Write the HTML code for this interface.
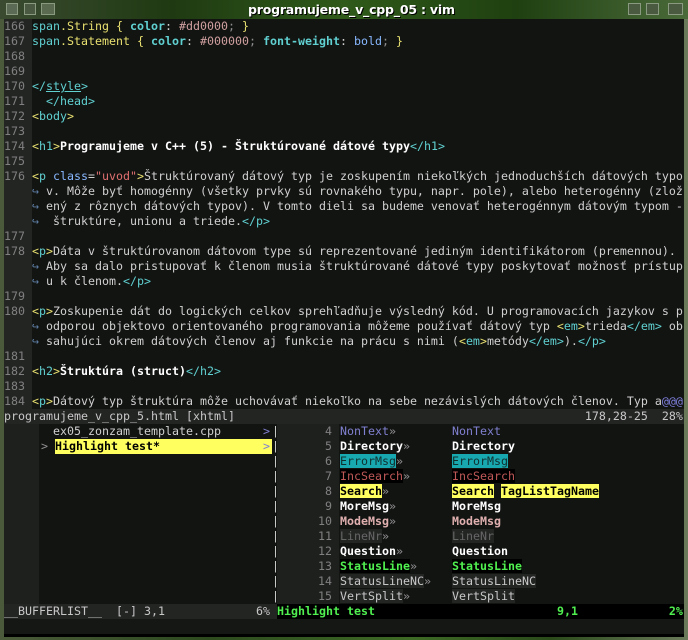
<!DOCTYPE html>
<html><head><meta charset="utf-8"><style>
*{margin:0;padding:0;box-sizing:border-box}
body{width:688px;height:640px;overflow:hidden;background:linear-gradient(90deg,#4a5a3a,#2d4a1e 30%,#3d6a25 60%,#2a4a1a 80%,#6a7a5a);position:relative;font-family:"DejaVu Sans Mono","Liberation Mono",monospace;font-size:11.63px}
#title{position:absolute;left:0;top:0;width:688px;height:19px;background:linear-gradient(90deg,#3a4a30,#1f3a12 25%,#2f5a1a 50%,#1f4010 75%,#4a6a3a);}
#title .t{position:absolute;left:248px;top:2px;font:bold 12.5px "DejaVu Sans","Liberation Sans",sans-serif;color:#fff;letter-spacing:-0.2px;text-shadow:1px 1px 0 #000}
.b{position:absolute;top:3px;width:12px;height:12px;border:1px solid #8a9a80;background:#4a5a40}
#vim{position:absolute;left:4px;top:19px;width:680px;height:618px;background:#121412;color:#d0d0d0;overflow:hidden}
.r{position:absolute;left:0;height:15px;line-height:15px;white-space:pre;width:680px}
.n{display:inline-block;width:28px;background:#232523;color:#808080}
.w{color:#6080a8}
.y{color:#e8e070}.c{color:#60d0d0}.cb{color:#60d0d0;font-weight:bold}.p{color:#d0a0a0}.lb{color:#88b8ff}.rd{color:#e07070}.g{color:#909090}
.bo{font-weight:bold;color:#fff}
.sl{background:#232523;color:#c8c8c8}
#hl div{height:15px;line-height:15px;white-space:pre}
</style></head><body>
<div id="title"><span class="b" style="left:6px;width:12px;background:#5a6a55"></span><span class="b" style="left:24px;background:#4a5a42"></span><span class="b" style="left:41px;width:14px;background:#5a6a50"></span><span class="t">programujeme_v_cpp_05 : vim</span>
<span class="b" style="left:628px;width:13px"></span><span class="b" style="left:646px;width:13px"></span><span class="b" style="left:668px;width:15px"></span></div>
<div id="vim">
<div class="r" style="top:0"><span class="n">166 </span><span class="c">span</span><span class="y">.String</span> <span class="y">{</span> <span class="cb">color</span>: <span class="p">#dd0000</span><span class="g">;</span> <span class="y">}</span></div>
<div class="r" style="top:15px"><span class="n">167 </span><span class="c">span</span><span class="y">.Statement</span> <span class="y">{</span> <span class="cb">color</span>: <span class="p">#000000</span><span class="g">;</span> <span class="cb">font-weight</span>: <span class="lb">bold</span><span class="g">;</span> <span class="y">}</span></div>
<div class="r" style="top:30px"><span class="n">168 </span></div>
<div class="r" style="top:45px"><span class="n">169 </span></div>
<div class="r" style="top:60px"><span class="n">170 </span><span class="c">&lt;/<u>style</u>&gt;</span></div>
<div class="r" style="top:75px"><span class="n">171 </span><span class="c">  &lt;/head&gt;</span></div>
<div class="r" style="top:90px"><span class="n">172 </span><span class="y">&lt;</span><span class="c">body</span><span class="y">&gt;</span></div>
<div class="r" style="top:105px"><span class="n">173 </span></div>
<div class="r" style="top:120px"><span class="n">174 </span><span class="y">&lt;</span><span class="c">h1</span><span class="y">&gt;</span><span class="bo">Programujeme v C++ (5) - Štruktúrované dátové typy</span><span class="c">&lt;/h1&gt;</span></div>
<div class="r" style="top:135px"><span class="n">175 </span></div>
<div class="r" style="top:150px"><span class="n">176 </span><span class="y">&lt;</span><span class="c">p</span> <span class="lb">class</span>=<span class="rd">"uvod"</span><span class="y">&gt;</span>Štruktúrovaný dátový typ je zoskupením niekoľkých jednoduchších dátových typo</div>
<div class="r" style="top:165px"><span class="n">    </span><span class="w">↪</span> v. Môže byť homogénny (všetky prvky sú rovnakého typu, napr. pole), alebo heterogénny (zlož</div>
<div class="r" style="top:180px"><span class="n">    </span><span class="w">↪</span> ený z rôznych dátových typov). V tomto dieli sa budeme venovať heterogénnym dátovým typom -</div>
<div class="r" style="top:195px"><span class="n">    </span><span class="w">↪</span>  štruktúre, unionu a triede.<span class="c">&lt;/p&gt;</span></div>
<div class="r" style="top:210px"><span class="n">177 </span></div>
<div class="r" style="top:225px"><span class="n">178 </span><span class="y">&lt;</span><span class="c">p</span><span class="y">&gt;</span>Dáta v štruktúrovanom dátovom type sú reprezentované jediným identifikátorom (premennou).</div>
<div class="r" style="top:240px"><span class="n">    </span><span class="w">↪</span> Aby sa dalo pristupovať k členom musia štruktúrované dátové typy poskytovať možnosť prístup</div>
<div class="r" style="top:255px"><span class="n">    </span><span class="w">↪</span> u k členom.<span class="c">&lt;/p&gt;</span></div>
<div class="r" style="top:270px"><span class="n">179 </span></div>
<div class="r" style="top:285px"><span class="n">180 </span><span class="y">&lt;</span><span class="c">p</span><span class="y">&gt;</span>Zoskupenie dát do logických celkov sprehľadňuje výsledný kód. U programovacích jazykov s p</div>
<div class="r" style="top:300px"><span class="n">    </span><span class="w">↪</span> odporou objektovo orientovaného programovania môžeme používať dátový typ <span class="y">&lt;</span><span class="c">em</span><span class="y">&gt;</span>trieda<span class="c">&lt;/em&gt;</span> ob</div>
<div class="r" style="top:315px"><span class="n">    </span><span class="w">↪</span> sahujúci okrem dátových členov aj funkcie na prácu s nimi (<span class="y">&lt;</span><span class="c">em</span><span class="y">&gt;</span>metódy<span class="c">&lt;/em&gt;</span>).<span class="c">&lt;/p&gt;</span></div>
<div class="r" style="top:330px"><span class="n">181 </span></div>
<div class="r" style="top:345px"><span class="n">182 </span><span class="y">&lt;</span><span class="c">h2</span><span class="y">&gt;</span><span class="bo">Štruktúra (struct)</span><span class="c">&lt;/h2&gt;</span></div>
<div class="r" style="top:360px"><span class="n">183 </span></div>
<div class="r" style="top:375px"><span class="n">184 </span><span class="y">&lt;</span><span class="c">p</span><span class="y">&gt;</span>Dátový typ štruktúra môže uchovávať niekoľko na sebe nezávislých dátových členov. Typ a<span style="color:#8080e0">@@@</span></div>
<div class="r sl" style="top:390px">programujeme_v_cpp_5.html [xhtml]                                                  178,28-25  28%</div>
<div style="position:absolute;left:0;top:405px;width:35px;height:180px;background:#1e201e"></div>
<div style="position:absolute;left:273px;top:405px;width:62px;height:180px;background:#1e201e"></div>
<div class="r" style="top:405px;left:49px;width:220px">ex05_zonzam_template.cpp</div>
<div class="r" style="top:420px;left:37px;width:230px"><span class="g">&gt;</span> <span style="display:inline-block;width:217px;background:#ffff60;color:#000;font-weight:bold">Highlight test*</span></div>
<div class="r" style="top:405px;left:259px;width:20px;color:#8080d0">&gt;</div>
<div class="r" style="top:420px;left:259px;width:20px;color:#8080d0">&gt;</div>
<div style="position:absolute;left:268px;top:405px;width:7px;height:180px;color:#ccc;line-height:15px;white-space:pre">|
|
|
|
|
|
|
|
|
|
|
|</div>
<div style="position:absolute;left:273px;top:405px;width:62px;color:#808080;line-height:15px;text-align:right;white-space:pre">4 
5 
6 
7 
8 
9 
10 
11 
12 
13 
14 
15 </div>
<div id="hl" style="position:absolute;left:336px;top:405px;width:340px">
<div><span style="color:#8080d0">NonText</span><span class="g">»</span>        <span style="color:#8080d0">NonText</span></div>
<div class="bo">Directory<span class="g" style="font-weight:normal">»</span>      Directory</div>
<div><span style="background:#18a8b0;color:#103030">ErrorMsg</span><span class="g">»</span>       <span style="background:#18a8b0;color:#103030">ErrorMsg</span></div>
<div><span style="background:#000;color:#c05858">IncSearch</span><span class="g">»</span>      <span style="background:#000;color:#c05858">IncSearch</span></div>
<div><span style="background:#ffff60;color:#000;font-weight:bold">Search</span><span class="g">»</span>         <span style="background:#ffff60;color:#000;font-weight:bold">Search</span> <span style="background:#ffff60;color:#000;font-weight:bold">TagListTagName</span></div>
<div class="bo">MoreMsg<span class="g" style="font-weight:normal">»</span>        MoreMsg</div>
<div style="color:#e0b0b0;font-weight:bold">ModeMsg<span class="g" style="font-weight:normal">»</span>        ModeMsg</div>
<div><span style="background:#232523;color:#666">LineNr</span><span class="g">»</span>         <span style="background:#232523;color:#666">LineNr</span></div>
<div class="bo">Question<span class="g" style="font-weight:normal">»</span>       Question</div>
<div><span style="background:#000;color:#50f050;font-weight:bold">StatusLine</span><span class="g">»</span>     <span style="background:#000;color:#50f050;font-weight:bold">StatusLine</span></div>
<div><span style="background:#232523;color:#c8c8c8">StatusLineNC</span><span class="g">»</span>   <span style="background:#232523;color:#c8c8c8">StatusLineNC</span></div>
<div><span style="background:#232523;color:#c8c8c8">VertSplit</span><span class="g">»</span>      <span style="background:#232523;color:#c8c8c8">VertSplit</span></div>
</div>
<div class="r sl" style="top:585px;width:273px">__BUFFERLIST__  [-] 3,1             6%</div>
<div class="r" style="top:585px;left:273px;width:407px;background:#000;color:#50f050;font-weight:bold">Highlight test                          9,1             2%</div>
<div class="r" style="top:600px;background:#151715"></div>
<div style="position:absolute;left:0;top:615px;width:680px;height:3px;background:#000"></div>
</div>
</body></html>
